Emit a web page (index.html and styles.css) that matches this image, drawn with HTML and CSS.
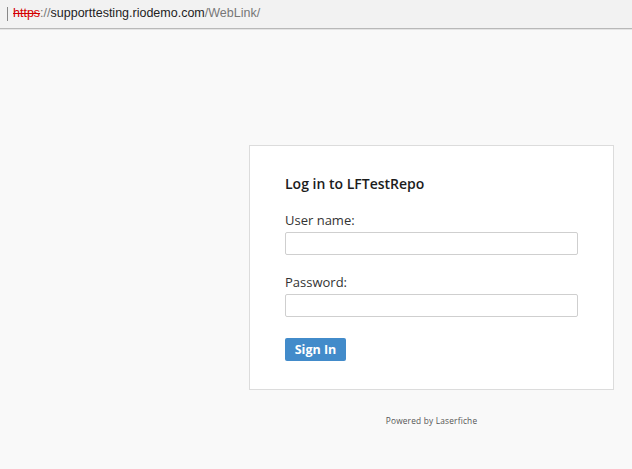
FILE: index.html
```html
<!doctype html>
<html>
    <head>
        <title>Log in to LFTestRepo</title>
        <link rel="stylesheet" href="styles.css">
    </head>
    <body>
        <div class="addr-bar">
            <span class="caret"></span>
            <span class="url"><s class="scheme">https</s><span class="dim">://</span>supporttesting.riodemo.com<span class="dim">/WebLink/</span></span>
        </div>
        <div class="page">
            <div class="login-col">
                <form class="login-box" action="">
                    <h2>Log in to LFTestRepo</h2>
                    <label for="user">User name:</label>
                    <input id="user" type="text" autocomplete="off" />
                    <label for="pass" class="second">Password:</label>
                    <input id="pass" type="password" />
                    <button type="button">Sign In</button>
                </form>
                <p class="powered">Powered by Laserfiche</p>
            </div>
        </div>
    </body>
</html>
```

FILE: styles.css
```css
* { margin: 0; padding: 0; box-sizing: border-box; }

body {
    font-family: 'Open Sans', sans-serif;
    background: #f9f9f9;
    height: 100vh;
    color: #222;
}

.addr-bar {
    height: 29px;
    background: #f2f2f2;
    border-bottom: 1px solid #b8b8b8;
    display: flex;
    align-items: center;
    padding-left: 7px;
    box-shadow: 0 1px 0 #e4e4e4;
}

.caret {
    width: 1px;
    height: 14px;
    background: #888;
    margin-right: 5px;
    margin-top: -1px;
}

.url {
    font-family: 'Liberation Sans', Arial, sans-serif;
    font-size: 12.5px;
    color: #222;
    margin-top: -2px;
}

.url .scheme {
    color: #d40000;
    text-decoration: line-through;
}

.url .dim {
    color: #777;
}

.page {
    padding: 116px 0 0 249px;
}

.login-col {
    width: 365px;
}

.login-box {
    display: flex;
    flex-direction: column;
    align-items: flex-start;
    background: #fff;
    border: 1px solid #dcdcdc;
    padding: 28px 35px 27px;
    height: 245px;
}

.login-box h2 {
    font-size: 14px;
    font-weight: 600;
    line-height: 20px;
    color: #1c1c1c;
    margin-bottom: 17px;
}

.login-box label {
    font-size: 13px;
    line-height: 18px;
    color: #333;
    margin-bottom: 3px;
}

.login-box label.second {
    margin-top: 18px;
}

.login-box input {
    width: 293px;
    height: 23px;
    border: 1px solid #cfcfcf;
    border-radius: 2px;
    background: #fff;
    font-family: 'Open Sans', sans-serif;
    padding: 2px 5px;
}

input:focus {
    outline: none;
}

.login-box button {
    margin-top: 21px;
    width: 61px;
    height: 23px;
    border: none;
    border-radius: 2px;
    background: #428bca;
    color: #fff;
    font-family: 'Open Sans', sans-serif;
    font-weight: 700;
    font-size: 12.5px;
}

.powered {
    text-align: center;
    font-size: 8.3px;
    color: #555;
    margin-top: 25px;
    letter-spacing: 0.2px;
}
```
